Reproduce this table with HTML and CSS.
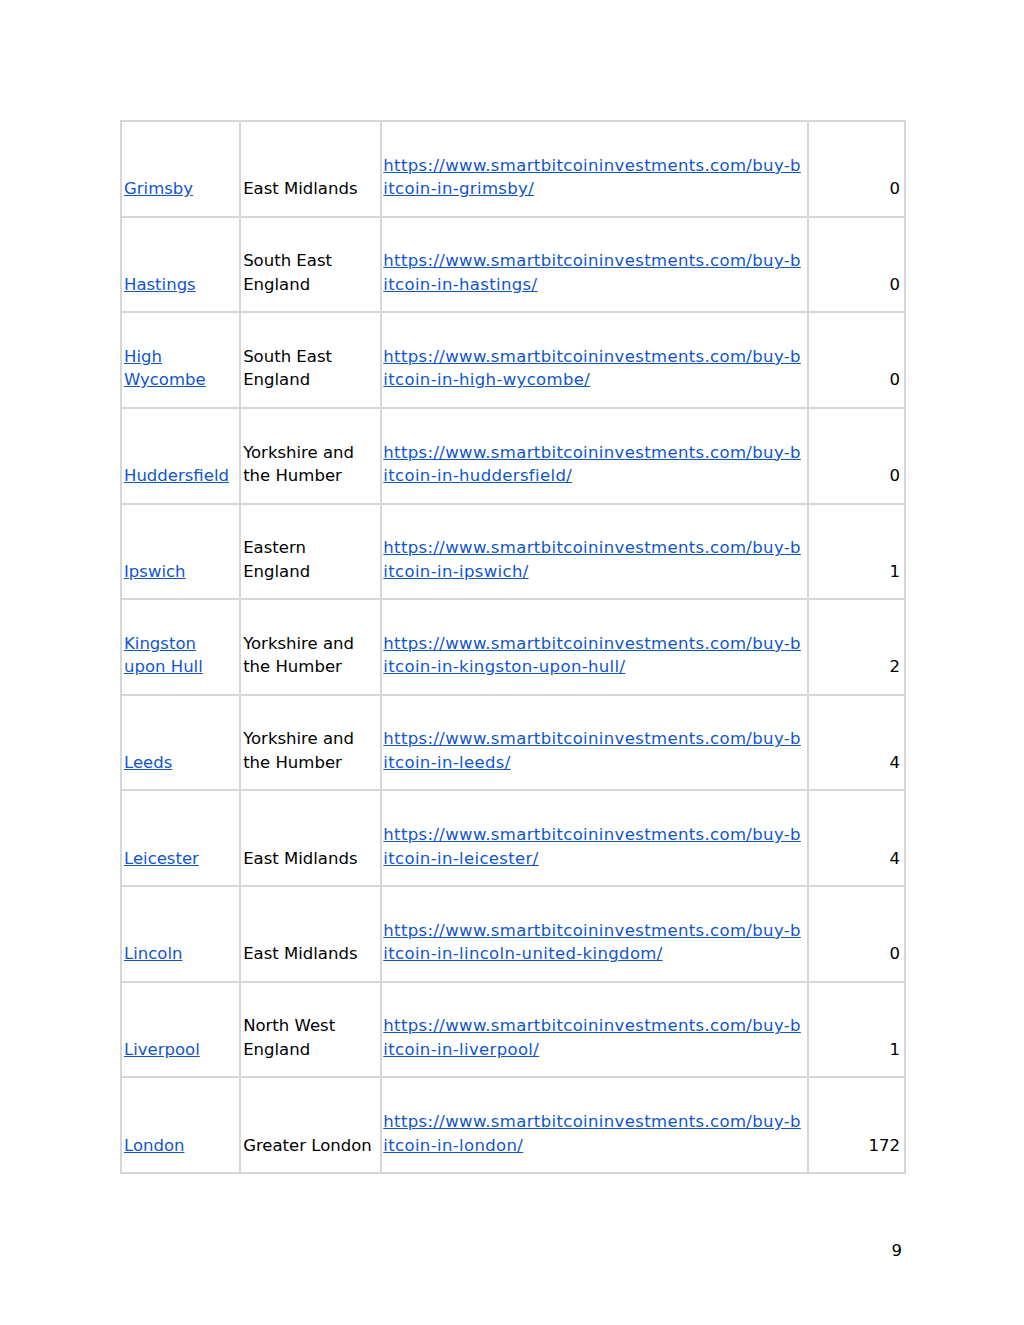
FILE: index.html
```html
<!DOCTYPE html>
<html>
<head>
<meta charset="utf-8">
<link rel="stylesheet" href="styles.css">
</head>
<body>
<div class="page">
<table class="grid">
<colgroup><col class="c1"><col class="c2"><col class="c3"><col class="c4"></colgroup>
<tbody>
<tr><td><a href="#">Grimsby</a></td><td>East Midlands</td><td class="url"><a href="#">https://www.smartbitcoininvestments.com/buy-b<br>itcoin-in-grimsby/</a></td><td class="num">0</td></tr>
<tr><td><a href="#">Hastings</a></td><td>South East England</td><td class="url"><a href="#">https://www.smartbitcoininvestments.com/buy-b<br>itcoin-in-hastings/</a></td><td class="num">0</td></tr>
<tr><td><a href="#">High Wycombe</a></td><td>South East England</td><td class="url"><a href="#">https://www.smartbitcoininvestments.com/buy-b<br>itcoin-in-high-wycombe/</a></td><td class="num">0</td></tr>
<tr><td><a href="#">Huddersfield</a></td><td>Yorkshire and the Humber</td><td class="url"><a href="#">https://www.smartbitcoininvestments.com/buy-b<br>itcoin-in-huddersfield/</a></td><td class="num">0</td></tr>
<tr><td><a href="#">Ipswich</a></td><td>Eastern England</td><td class="url"><a href="#">https://www.smartbitcoininvestments.com/buy-b<br>itcoin-in-ipswich/</a></td><td class="num">1</td></tr>
<tr><td><a href="#">Kingston upon Hull</a></td><td>Yorkshire and the Humber</td><td class="url"><a href="#">https://www.smartbitcoininvestments.com/buy-b<br>itcoin-in-kingston-upon-hull/</a></td><td class="num">2</td></tr>
<tr><td><a href="#">Leeds</a></td><td>Yorkshire and the Humber</td><td class="url"><a href="#">https://www.smartbitcoininvestments.com/buy-b<br>itcoin-in-leeds/</a></td><td class="num">4</td></tr>
<tr><td><a href="#">Leicester</a></td><td>East Midlands</td><td class="url"><a href="#">https://www.smartbitcoininvestments.com/buy-b<br>itcoin-in-leicester/</a></td><td class="num">4</td></tr>
<tr><td><a href="#">Lincoln</a></td><td>East Midlands</td><td class="url"><a href="#">https://www.smartbitcoininvestments.com/buy-b<br>itcoin-in-lincoln-united-kingdom/</a></td><td class="num">0</td></tr>
<tr><td><a href="#">Liverpool</a></td><td>North West England</td><td class="url"><a href="#">https://www.smartbitcoininvestments.com/buy-b<br>itcoin-in-liverpool/</a></td><td class="num">1</td></tr>
<tr><td><a href="#">London</a></td><td>Greater London</td><td class="url"><a href="#">https://www.smartbitcoininvestments.com/buy-b<br>itcoin-in-london/</a></td><td class="num">172</td></tr>
</tbody>
</table>
<div class="pagenum">9</div>
</div>
</body>
</html>
```

FILE: styles.css
```css
html, body {
  margin: 0;
  padding: 0;
  background: #ffffff;
}
body {
  font-family: "DejaVu Sans", Verdana, sans-serif;
  font-size: 16.5px;
  color: #000000;
}
.page {
  width: 1024px;
  height: 1325px;
  padding: 120px 0 0 120px;
  box-sizing: border-box;
  position: relative;
}
.grid {
  border-collapse: collapse;
  table-layout: fixed;
  width: 786px;
}
.c1 { width: 119px; }
.c2 { width: 141px; }
.c3 { width: 426px; }
.c4 { width: 97px; }
.grid td {
  border: 2px solid #d6d6d6;
  height: 78.65px;
  vertical-align: bottom;
  padding: 0 4px 15px 2px;
  line-height: 23.5px;
  overflow: hidden;
}
.grid td.url {
  padding-left: 1px;
  letter-spacing: 0.35px;
}
.grid a {
  color: #1155cc;
  text-decoration: underline;
}
.url a {
  white-space: nowrap;
}
.num {
  text-align: right;
}
.pagenum {
  width: 782px;
  text-align: right;
  margin-top: 67px;
}
```
